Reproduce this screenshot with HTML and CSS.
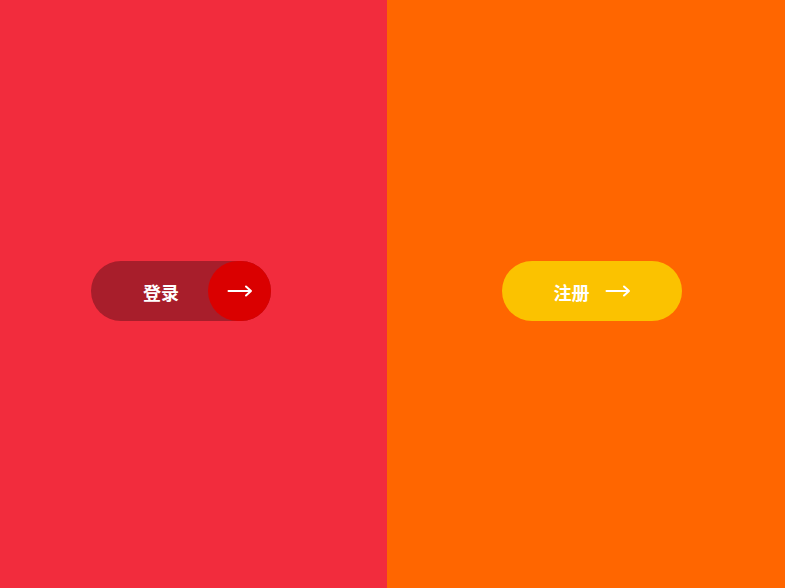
FILE: index.html
```html
<!DOCTYPE html>
<html lang="zh">
<head>
<meta charset="utf-8">
<link rel="stylesheet" href="styles.css">
</head>
<body>
<div class="page">
  <section class="panel panel-red">
    <a class="btn btn-login" href="#">
      <span class="label">登录</span>
      <span class="circle">
        <svg class="arrow" width="26" height="14" viewBox="0 0 26 14"><path d="M1.5 7H24M19 2.5L24 7L19 11.5" fill="none" stroke="#fff" stroke-width="2" stroke-linecap="round" stroke-linejoin="round"/></svg>
      </span>
    </a>
  </section>
  <section class="panel panel-orange">
    <a class="btn btn-register" href="#">
      <span class="label">注册</span>
      <svg class="arrow" width="26" height="14" viewBox="0 0 26 14"><path d="M1.5 7H24M19 2.5L24 7L19 11.5" fill="none" stroke="#fff" stroke-width="2" stroke-linecap="round" stroke-linejoin="round"/></svg>
    </a>
  </section>
</div>
</body>
</html>
```
FILE: styles.css
```css
html, body {
  margin: 0;
  padding: 0;
  height: 100%;
}
body {
  font-family: "Noto Sans CJK SC", "Noto Sans", sans-serif;
}
.page {
  display: grid;
  grid-template-columns: 387px 1fr;
  height: 588px;
}
.panel {
  display: flex;
  align-items: center;
  padding-bottom: 6px;
  box-sizing: border-box;
}
.panel-red {
  background: #f22c3d;
  padding-left: 91px;
}
.panel-orange {
  background: #ff6600;
  padding-left: 115px;
}
.btn {
  display: flex;
  align-items: center;
  width: 180px;
  height: 60px;
  border-radius: 30px;
  text-decoration: none;
  color: #fff;
  box-sizing: border-box;
}
.label {
  font-size: 18px;
  font-weight: 700;
  line-height: 1;
  margin-top: 1px;
}
.btn-login {
  background: #a81e2b;
  padding-left: 52px;
}
.btn-login .circle {
  margin-left: auto;
  width: 63px;
  height: 60px;
  border-radius: 30px;
  background: #da0000;
  display: flex;
  align-items: center;
  justify-content: center;
}
.btn-register {
  background: #fbc200;
  justify-content: center;
  gap: 15px;
}
.arrow {
  display: block;
}
```
